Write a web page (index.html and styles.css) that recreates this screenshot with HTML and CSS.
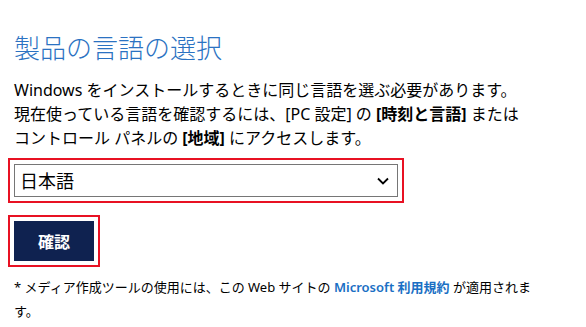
FILE: index.html
```html
<!DOCTYPE html>
<html lang="ja">
  <head>
    <meta charset="UTF-8" />
    <meta name="viewport" content="width=device-width, initial-scale=1.0" />
    <title>製品の言語の選択</title>
    <link rel="stylesheet" href="styles.css">
  </head>
  <body>
    <div class="lang-panel">
      <h1 class="panel-title">製品の言語の選択</h1>
      <p class="intro">
        Windows をインストールするときに同じ言語を選ぶ必要があります。<br>
        現在使っている言語を確認するには、[PC 設定] の <b>[時刻と言語]</b> または<br>
        コントロール パネルの <b>[地域]</b> にアクセスします。
      </p>
      <div class="select-wrap">
        <select class="lang-select">
          <option>日本語</option>
          <option>English (United States)</option>
          <option>Deutsch</option>
          <option>Français</option>
        </select>
        <svg class="chevron" width="12" height="8" viewBox="0 0 12 8">
          <path d="M1 1.5 L6 6.5 L11 1.5" fill="none" stroke="#000" stroke-width="1.8" />
        </svg>
      </div>
      <button class="confirm">確認</button>
      <p class="note">
        * メディア作成ツールの使用には、この Web サイトの <a href="#" class="terms">Microsoft 利用規約</a> が適用されます。
      </p>
    </div>
  </body>
</html>
```

FILE: styles.css
```css
body {
  margin: 0;
  font-family: "Noto Sans", "Noto Sans CJK JP", sans-serif;
  background-color: #fff;
  color: #000;
}
.lang-panel {
  padding: 31px 14px 0 14px;
  width: 536px;
}
.panel-title {
  margin: 0;
  font-size: 26px;
  line-height: 34px;
  font-weight: 300;
  color: #2b72c2;
}
.intro {
  margin: 13px 0 0 0;
  font-size: 16px;
  line-height: 24px;
}
.intro b {
  font-weight: bold;
}
.select-wrap {
  position: relative;
  margin-top: 14px;
  width: 384px;
  height: 33px;
  outline: 2px solid #e81123;
  outline-offset: 4px;
}
.lang-select {
  appearance: none;
  width: 384px;
  height: 33px;
  margin: 0;
  padding: 0 30px 0 5px;
  border: 1px solid #767676;
  border-radius: 0;
  background-color: #fff;
  font-family: "Noto Sans", "Noto Sans CJK JP", sans-serif;
  font-size: 18px;
  color: #000;
}
.chevron {
  position: absolute;
  right: 9px;
  top: 13px;
  pointer-events: none;
}
.confirm {
  display: block;
  margin-top: 24px;
  width: 80px;
  height: 40px;
  border: none;
  background-color: #0f2250;
  color: #fff;
  font-family: "Noto Sans", "Noto Sans CJK JP", sans-serif;
  font-size: 16px;
  font-weight: bold;
  outline: 2px solid #e81123;
  outline-offset: 4px;
  cursor: pointer;
}
.note {
  margin: 14px 0 0 0;
  font-size: 13px;
  line-height: 24px;
}
.terms {
  color: #1a6fc4;
  font-weight: 600;
  text-decoration: none;
}
```
